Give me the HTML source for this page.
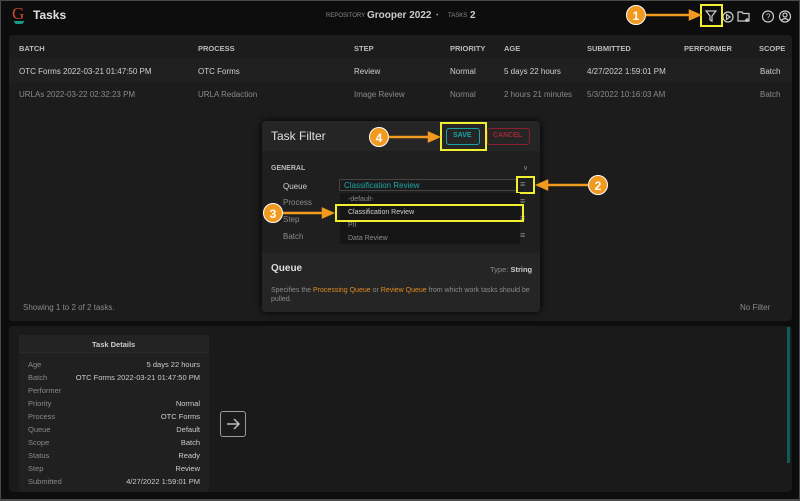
<!DOCTYPE html>
<html><head><style>
*{box-sizing:border-box;margin:0;padding:0}
body{width:800px;height:500px;background:#4a4a4a;font-family:"Liberation Sans",sans-serif;overflow:hidden;position:relative}
#app{position:absolute;left:1px;top:1px;width:798px;height:498px;background:#0d0d0d}
.abs{position:absolute}
.t{position:absolute;white-space:nowrap;font-size:8px;color:#d0d0d0}
.h{font-weight:bold;color:#bbb;font-size:7.5px}
.g{color:#8a8a8a}
.badge{position:absolute;width:20px;height:20px;border-radius:50%;background:#f29a1f;color:#fff;font-weight:bold;font-size:12px;text-align:center;line-height:20px;border:1px solid #fff}
.yb{position:absolute;border:2px solid #f0f030}
</style></head><body><div id="app">
<div class="t" style="left:11px;top:3px;font-size:17px;color:#c84a2a;font-family:'Liberation Serif',serif">G</div>
<div class="abs" style="left:13px;top:20px;width:10px;height:3px;background:#1a9a8a;border-radius:0 0 5px 5px"></div>
<div class="t" style="left:32px;top:7px;font-size:12px;font-weight:bold;color:#e0e0e0">Tasks</div>
<div class="t g" style="left:325px;top:12px;font-size:6px">REPOSITORY</div>
<div class="t" style="left:366px;top:9px;font-size:10px;font-weight:bold;color:#ccc">Grooper 2022</div>
<div class="t g" style="left:435px;top:11px;font-size:7px">•</div>
<div class="t g" style="left:447px;top:12px;font-size:6px">TASKS</div>
<div class="t" style="left:469px;top:9px;font-size:10px;font-weight:bold;color:#ccc">2</div>
<svg class="abs" style="left:700px;top:6px" width="100" height="20" viewBox="0 0 100 20" fill="none" stroke="#ccc" stroke-width="1.2">
<path d="M5 4h10l-4 5v5l-2 -1v-4z"/>
<circle cx="27" cy="10" r="5"/><path d="M25.5 7.5v5l3.5-2.5z"/>
<path d="M37 5h4l1 1.5h6v7.5h-11z"/><path d="M46 11v4M44 13h4"/>
<circle cx="67" cy="9.5" r="5.5"/><text x="65" y="12.5" font-size="8" fill="#ccc" stroke="none" font-family="Liberation Sans">?</text>
<circle cx="84" cy="9.5" r="5.5"/><circle cx="84" cy="8" r="2"/><path d="M80.5 13.5c2-2.5 5-2.5 7 0"/>
</svg>
<div class="yb" style="left:699px;top:3px;width:23px;height:23px"></div>
<div class="abs" style="left:8px;top:34px;width:783px;height:286px;background:#1c1c1c;border-radius:4px"></div>
<div class="abs" style="left:8px;top:58px;width:783px;height:24px;background:#202020"></div>
<div class="t h" style="left:18px;top:43px">BATCH</div>
<div class="t h" style="left:197px;top:43px">PROCESS</div>
<div class="t h" style="left:353px;top:43px">STEP</div>
<div class="t h" style="left:449px;top:43px">PRIORITY</div>
<div class="t h" style="left:503px;top:43px">AGE</div>
<div class="t h" style="left:586px;top:43px">SUBMITTED</div>
<div class="t h" style="left:683px;top:43px">PERFORMER</div>
<div class="t h" style="left:758px;top:43px">SCOPE</div>
<div class="t" style="left:18px;top:66px">OTC Forms 2022-03-21 01:47:50 PM</div>
<div class="t" style="left:197px;top:66px">OTC Forms</div>
<div class="t" style="left:353px;top:66px">Review</div>
<div class="t" style="left:449px;top:66px">Normal</div>
<div class="t" style="left:503px;top:66px">5 days 22 hours</div>
<div class="t" style="left:586px;top:66px">4/27/2022 1:59:01 PM</div>
<div class="t" style="left:759px;top:66px">Batch</div>
<div class="t g" style="left:18px;top:89px">URLAs 2022-03-22 02:32:23 PM</div>
<div class="t g" style="left:197px;top:89px">URLA Redaction</div>
<div class="t g" style="left:353px;top:89px">Image Review</div>
<div class="t g" style="left:449px;top:89px">Normal</div>
<div class="t g" style="left:503px;top:89px">2 hours 21 minutes</div>
<div class="t g" style="left:586px;top:89px">5/3/2022 10:16:03 AM</div>
<div class="t g" style="left:759px;top:89px">Batch</div>
<div class="t g" style="left:22px;top:302px">Showing 1 to 2 of 2 tasks.</div>
<div class="t g" style="left:739px;top:302px">No Filter</div>
<div class="abs" style="left:8px;top:325px;width:783px;height:166px;background:#1a1a1a;border-radius:4px"></div>
<div class="abs" style="left:786px;top:326px;width:3px;height:136px;background:#135a5a"></div>
<div class="abs" style="left:18px;top:334px;width:190px;height:157px;background:#202020;border-radius:3px"></div>
<div class="abs" style="left:18px;top:334px;width:190px;height:18px;background:#232323;border-bottom:1px solid #2a2a2a"></div>
<div class="t h" style="left:91px;top:339px;color:#ccc">Task Details</div>
<div style="position:absolute;left:27px;top:357px;font-size:7.5px;line-height:13px;color:#8a8a8a">Age<br>Batch<br>Performer<br>Priority<br>Process<br>Queue<br>Scope<br>Status<br>Step<br>Submitted</div>
<div style="position:absolute;right:599px;top:357px;font-size:7.5px;line-height:13px;color:#ccc;text-align:right">5 days 22 hours<br>OTC Forms 2022-03-21 01:47:50 PM<br>&nbsp;<br>Normal<br>OTC Forms<br>Default<br>Batch<br>Ready<br>Review<br>4/27/2022 1:59:01 PM</div>
<div class="abs" style="left:219px;top:410px;width:26px;height:26px;border:1.5px solid #999;border-radius:3px"></div>
<svg class="abs" style="left:219px;top:410px" width="26" height="26" fill="none" stroke="#bbb" stroke-width="1.5"><path d="M7 13h12M14 8l5 5-5 5"/></svg>
<div class="abs" style="left:261px;top:120px;width:278px;height:191px;background:#1f1f1f;border-radius:4px;box-shadow:0 0 8px #000"></div>
<div class="abs" style="left:261px;top:120px;width:278px;height:30px;background:#252525;border-radius:4px 4px 0 0"></div>
<div class="abs" style="left:261px;top:252px;width:278px;height:59px;background:#252525;border-radius:0 0 4px 4px"></div>
<div class="t" style="left:270px;top:128px;font-size:12px;color:#e0e0e0">Task Filter</div>
<div class="abs" style="left:445px;top:127px;width:34px;height:17px;border:1px solid #1aa5a5;border-radius:3px"></div>
<div class="t" style="left:452px;top:131px;font-size:7px;font-weight:bold;color:#1aa5a5">SAVE</div>
<div class="abs" style="left:486px;top:127px;width:43px;height:17px;border:1px solid #8a2030;border-radius:3px"></div>
<div class="t" style="left:492px;top:131px;font-size:7px;font-weight:bold;color:#a02838">CANCEL</div>
<div class="yb" style="left:439px;top:121px;width:47px;height:29px"></div>
<div class="t h" style="left:270px;top:164px;font-size:7px">GENERAL</div>
<div class="t g" style="left:522px;top:163px;font-size:7px">∨</div>
<div class="t" style="left:282px;top:181px">Queue</div>
<div class="t g" style="left:282px;top:197px">Process</div>
<div class="t g" style="left:282px;top:214px">Step</div>
<div class="t g" style="left:282px;top:231px">Batch</div>
<div class="abs" style="left:338px;top:178px;width:178px;height:12px;border:1px solid #444;border-radius:2px;background:#1b1b1b"></div>
<div class="t" style="left:343px;top:180px;color:#1aa5a5">Classification Review</div>
<div class="t g" style="left:519px;top:178px;font-size:9px">≡</div>
<div class="t g" style="left:519px;top:195px;font-size:9px">≡</div>
<div class="t g" style="left:519px;top:212px;font-size:9px">≡</div>
<div class="t g" style="left:519px;top:229px;font-size:9px">≡</div>
<div class="yb" style="left:515px;top:175px;width:19px;height:18px"></div>
<div class="abs" style="left:339px;top:192px;width:180px;height:51px;background:#161616"></div>
<div class="t g" style="left:347px;top:195px;font-size:7px">-default-</div>
<div class="t" style="left:347px;top:208px;font-size:7px">Classification Review</div>
<div class="t g" style="left:347px;top:221px;font-size:7px">PII</div>
<div class="t g" style="left:347px;top:234px;font-size:7px">Data Review</div>
<div class="yb" style="left:334px;top:203px;width:189px;height:18px"></div>
<div class="t" style="left:270px;top:262px;font-size:10px;font-weight:bold;color:#ddd">Queue</div>
<div class="t g" style="left:489px;top:264px;font-size:7.5px">Type: <b style="color:#ccc">String</b></div>
<div class="t g" style="left:270px;top:285px;font-size:7px;line-height:9px">Specifies the <span style="color:#e08a20">Processing Queue</span> or <span style="color:#e08a20">Review Queue</span> from which work tasks should be<br>pulled.</div>
<svg class="abs" style="left:0;top:0" width="800" height="500">
<g stroke="#f29a1f" stroke-width="2.5" fill="#f29a1f">
<line x1="645" y1="14" x2="690" y2="14"/><path d="M698 14l-9-4v8z"/>
<line x1="590" y1="184" x2="546" y2="184"/><path d="M537 184l9-4v8z"/>
<line x1="282" y1="212" x2="322" y2="212"/><path d="M331 212l-9-4v8z"/>
<line x1="388" y1="136" x2="428" y2="136"/><path d="M437 136l-9-4v8z"/>
</g></svg>
<div class="badge" style="left:625px;top:4px">1</div>
<div class="badge" style="left:587px;top:174px">2</div>
<div class="badge" style="left:262px;top:202px">3</div>
<div class="badge" style="left:368px;top:126px">4</div>
</div></body></html>
